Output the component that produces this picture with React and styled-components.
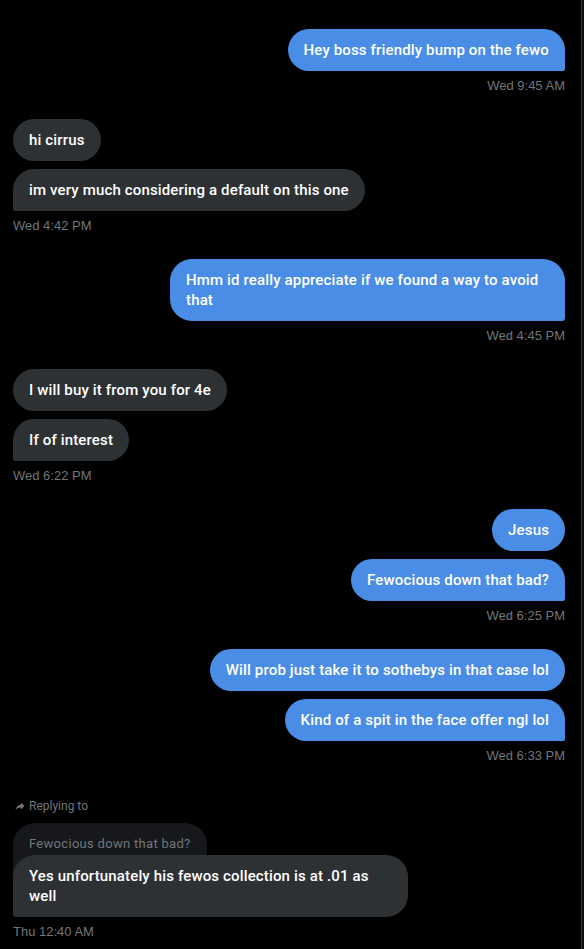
import React from "react";
import styled, { createGlobalStyle, css } from "styled-components";

const GlobalStyle = createGlobalStyle`
  html, body {
    margin: 0;
    background: #000;
  }
  body {
    font-family: Roboto, "Liberation Sans", Arial, sans-serif;
    -webkit-font-smoothing: antialiased;
  }
`;

const Screen = styled.div`
  display: flex;
  min-height: 949px;
  background: #0d0d0d;
`;

const Thread = styled.div`
  padding: 29px 16px 0 13px;
  box-sizing: border-box;
  width: 582px;
  background: #000;
  border-right: 1px solid #33373a;
  display: flex;
  flex-direction: column;
`;

const Group = styled.div`
  display: flex;
  flex-direction: column;
  align-items: ${(p) => (p.$mine ? "flex-end" : "flex-start")};
  margin-bottom: 25px;
`;

const Bubble = styled.div`
  max-width: 363px;
  padding: 11px 16px;
  font-size: 15px;
  line-height: 20px;
  font-weight: 500;
  letter-spacing: 0.15px;
  color: #fff;
  border-radius: 22px;
  background: ${(p) => (p.$mine ? "#4a8de6" : "#2e3134")};
  & + & {
    margin-top: 8px;
  }
  ${(p) =>
    p.$tail &&
    (p.$mine
      ? css`
          border-bottom-right-radius: 3px;
        `
      : css`
          border-bottom-left-radius: 3px;
        `)}
`;

const Time = styled.div`
  margin-top: 7px;
  font-family: "Liberation Sans", Arial, sans-serif;
  font-size: 13px;
  line-height: 16px;
  color: #71767b;
`;

const ReplyLabel = styled.div`
  display: flex;
  align-items: center;
  gap: 3px;
  margin: 9px 0 9px 1px;
  font-size: 12px;
  line-height: 16px;
  color: #71767b;
  svg {
    width: 12px;
    height: 12px;
    fill: #71767b;
  }
`;

const Quote = styled.div`
  padding: 12px 16px 22px;
  font-size: 13px;
  line-height: 18px;
  letter-spacing: 0.3px;
  color: #71767b;
  background: #16181c;
  border-radius: 22px 22px 0 0;
  & + ${Bubble} {
    margin-top: -20px;
  }
`;

const groups = [
  { mine: true, msgs: ["Hey boss friendly bump on the fewo"], time: "Wed 9:45 AM" },
  {
    mine: false,
    msgs: ["hi cirrus", "im very much considering a default on this one"],
    time: "Wed 4:42 PM",
  },
  {
    mine: true,
    msgs: ["Hmm id really appreciate if we found a way to avoid that"],
    time: "Wed 4:45 PM",
  },
  {
    mine: false,
    msgs: ["I will buy it from you for 4e", "If of interest"],
    time: "Wed 6:22 PM",
  },
  { mine: true, msgs: ["Jesus", "Fewocious down that bad?"], time: "Wed 6:25 PM" },
  {
    mine: true,
    msgs: [
      "Will prob just take it to sothebys in that case lol",
      "Kind of a spit in the face offer ngl lol",
    ],
    time: "Wed 6:33 PM",
  },
];

function ForwardIcon() {
  return (
    <svg viewBox="0 0 24 24">
      <path d="M14 9V5l7 7-7 7v-4.1c-5 0-8.5 1.6-11 5.1 1-5 4-10 11-11z" />
    </svg>
  );
}

export default function App() {
  return (
    <Screen>
      <GlobalStyle />
      <Thread>
        {groups.map((g, i) => (
          <Group key={i} $mine={g.mine}>
            {g.msgs.map((m, j) => (
              <Bubble key={j} $mine={g.mine} $tail={j === g.msgs.length - 1}>
                {m}
              </Bubble>
            ))}
            <Time>{g.time}</Time>
          </Group>
        ))}
        <Group $mine={false}>
          <ReplyLabel>
            <ForwardIcon />
            Replying to
          </ReplyLabel>
          <Quote>Fewocious down that bad?</Quote>
          <Bubble $tail>Yes unfortunately his fewos collection is at .01 as well</Bubble>
          <Time>Thu 12:40 AM</Time>
        </Group>
      </Thread>
    </Screen>
  );
}
